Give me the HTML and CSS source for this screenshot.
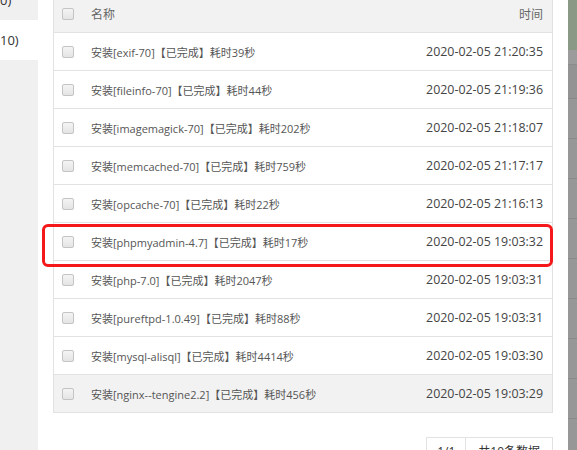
FILE: index.html
```html
<!DOCTYPE html>
<html lang="zh-CN">
<head>
<meta charset="utf-8">
<title>安装日志</title>
<link rel="stylesheet" href="styles.css">
</head>
<body>
<div class="page">
  <aside class="side">
    <div class="side-item">0)</div>
    <div class="side-item active">10)</div>
  </aside>
  <main class="main">
    <div class="list">
      <div class="row head">
        <span class="cb"></span>
        <span class="name">名称</span>
        <span class="time">时间</span>
      </div>
      <div class="row"><span class="cb"></span><span class="name">安装[exif-70]【已完成】耗时39秒</span><span class="time">2020-02-05 21:20:35</span></div>
      <div class="row"><span class="cb"></span><span class="name">安装[fileinfo-70]【已完成】耗时44秒</span><span class="time">2020-02-05 21:19:36</span></div>
      <div class="row"><span class="cb"></span><span class="name">安装[imagemagick-70]【已完成】耗时202秒</span><span class="time">2020-02-05 21:18:07</span></div>
      <div class="row"><span class="cb"></span><span class="name">安装[memcached-70]【已完成】耗时759秒</span><span class="time">2020-02-05 21:17:17</span></div>
      <div class="row"><span class="cb"></span><span class="name">安装[opcache-70]【已完成】耗时22秒</span><span class="time">2020-02-05 21:16:13</span></div>
      <div class="row marked"><span class="cb"></span><span class="name">安装[phpmyadmin-4.7]【已完成】耗时17秒</span><span class="time">2020-02-05 19:03:32</span></div>
      <div class="row"><span class="cb"></span><span class="name">安装[php-7.0]【已完成】耗时2047秒</span><span class="time">2020-02-05 19:03:31</span></div>
      <div class="row"><span class="cb"></span><span class="name">安装[pureftpd-1.0.49]【已完成】耗时88秒</span><span class="time">2020-02-05 19:03:31</span></div>
      <div class="row"><span class="cb"></span><span class="name">安装[mysql-alisql]【已完成】耗时4414秒</span><span class="time">2020-02-05 19:03:30</span></div>
      <div class="row hover"><span class="cb"></span><span class="name">安装[nginx--tengine2.2]【已完成】耗时456秒</span><span class="time">2020-02-05 19:03:29</span></div>
    </div>
    <div class="pager">
      <span class="pg-cell">1/1</span>
      <span class="pg-cell">共10条数据</span>
    </div>
  </main>
  <div class="backdrop">
    <div class="bd-top"></div>
    <div class="bd-a"></div>
    <div class="bd-b"></div>
    <div class="bd-row"></div>
    <div class="bd-row"></div>
    <div class="bd-row"></div>
    <div class="bd-row"></div>
    <div class="bd-row"></div>
    <div class="bd-row"></div>
    <div class="bd-row"></div>
    <div class="bd-row"></div>
    <div class="bd-row"></div>
  </div>
</div>
</body>
</html>
```

FILE: styles.css
```css
* { box-sizing: border-box; }
html, body {
  margin: 0;
  padding: 0;
  background: #fff;
}
body {
  font-family: "Open Sans", "Noto Sans CJK SC", sans-serif;
  color: #333;
}
.page {
  display: flex;
  width: 577px;
  height: 450px;
  overflow: hidden;
}
.side {
  width: 38px;
  flex: none;
  background: #f0f0f0;
  overflow: hidden;
}
.side-item {
  height: 40px;
  line-height: 40px;
  font-size: 13px;
  color: #333;
  white-space: nowrap;
}
.side-item:first-child { margin-top: -20px; }
.side-item.active { background: #fff; }

.main {
  flex: 1;
  padding: 0 15px;
  min-width: 0;
}
.list {
  margin-top: -6px;
  border: 1px solid #e2e2e2;
}
.row {
  position: relative;
  display: flex;
  align-items: center;
  height: 38px;
  border-bottom: 1px solid #e2e2e2;
  padding: 0 9px 0 8px;
  font-size: 11px;
  color: #555;
}
.row:last-child { border-bottom: none; height: 37px; }
.row.head { background: #f2f2f2; color: #666; font-size: 12px; }
.row.hover { background: #f2f2f2; }
.cb {
  width: 12px;
  height: 12px;
  border: 1px solid #c4c4c4;
  border-radius: 2px;
  background: linear-gradient(#f4f4f4, #e4e4e4);
  flex: none;
}
.name {
  margin-left: 17px;
  white-space: nowrap;
}
.time {
  margin-left: auto;
  white-space: nowrap;
  font-size: 12.4px;
  color: #444;
}
.row.head .time {
  font-size: 12px;
  color: #666;
}
.marked::after {
  content: "";
  position: absolute;
  left: -12px;
  right: -1px;
  top: 1px;
  height: 37px;
  border: 3px solid #f5181a;
  border-radius: 6px;
}

.pager {
  display: flex;
  justify-content: flex-end;
  margin-top: 24px;
}
.pg-cell {
  height: 30px;
  line-height: 28px;
  padding: 0 10px;
  border: 1px solid #e2e2e2;
  font-size: 12px;
  color: #333;
}
.pg-cell:last-child { padding: 0 12px; }
.pg-cell + .pg-cell { border-left: none; }

.backdrop {
  width: 9px;
  flex: none;
  background: #969696;
}
.bd-top { height: 50px; background: #8a9985; }
.bd-a { height: 15px; background: #9b9b9b; border-bottom: 1px solid #8c8c8c; }
.bd-b { height: 34px; background: #939393; border-bottom: 1px solid #888; }
.bd-row { height: 40px; background: #979797; border-bottom: 1px solid #8a8a8a; }
```
